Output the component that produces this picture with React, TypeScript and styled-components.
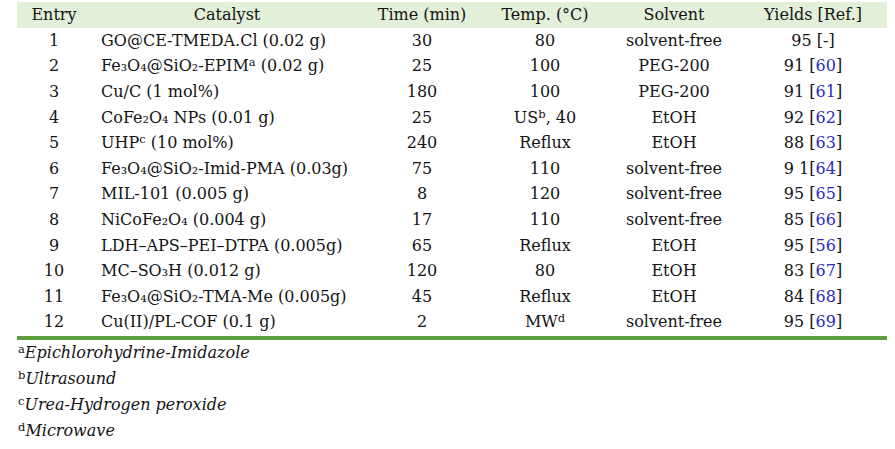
import React from "react";
import styled, {createGlobalStyle} from "styled-components";

const GlobalStyle = createGlobalStyle`
    body {
        margin: 0;
        background: #ffffff;
        font-family: "DejaVu Serif", "Liberation Serif", serif;
        color: #141414;
    }
`;

const Page = styled.div`
    padding: 2px 0 0 17px;
    width: 870px;
`;

const cols = "74px 272px 118px 128px 130px 148px";

const HeaderRow = styled.div`
    display: grid;
    grid-template-columns: ${cols};
    align-items: center;
    height: 26px;
    background: #e2efd9;
    font-size: 16px;
`;

const Row = styled.div`
    display: grid;
    grid-template-columns: ${cols};
    align-items: center;
    height: 25.6px;
    font-size: 16px;
`;

const Cell = styled.div<{$left?: boolean}>`
    text-align: ${(p) => (p.$left ? "left" : "center")};
    padding-left: ${(p) => (p.$left ? "10px" : "0")};
    white-space: nowrap;
    line-height: 1;
`;

const Rule = styled.div`
    height: 4px;
    background: #5c9d3d;
    margin-top: 1px;
`;

const Sup = styled.sup`
    font-size: 11.5px;
    line-height: 0;
    vertical-align: 0.45em;
    font-style: normal;
`;

const Ref = styled.span`
    color: #2a2ac0;
`;

const Notes = styled.div`
    display: flex;
    flex-direction: column;
    margin-left: 1px;
`;

const Note = styled.div`
    height: 26px;
    line-height: 26px;
    font-size: 16px;
    font-style: italic;
`;

type Entry = {
    n: string;
    catalyst: React.ReactNode;
    time: string;
    temp: React.ReactNode;
    solvent: string;
    yld: string;
    ref: string;
};

const rows: Entry[] = [
    {n: "1", catalyst: "GO@CE-TMEDA.Cl (0.02 g)", time: "30", temp: "80", solvent: "solvent-free", yld: "95 ", ref: "-"},
    {n: "2", catalyst: <>Fe₃O₄@SiO₂-EPIM<Sup>a</Sup> (0.02 g)</>, time: "25", temp: "100", solvent: "PEG-200", yld: "91 ", ref: "60"},
    {n: "3", catalyst: "Cu/C (1 mol%)", time: "180", temp: "100", solvent: "PEG-200", yld: "91 ", ref: "61"},
    {n: "4", catalyst: "CoFe₂O₄ NPs (0.01 g)", time: "25", temp: <>US<Sup>b</Sup>, 40</>, solvent: "EtOH", yld: "92 ", ref: "62"},
    {n: "5", catalyst: <>UHP<Sup>c</Sup> (10 mol%)</>, time: "240", temp: "Reflux", solvent: "EtOH", yld: "88 ", ref: "63"},
    {n: "6", catalyst: "Fe₃O₄@SiO₂-Imid-PMA (0.03g)", time: "75", temp: "110", solvent: "solvent-free", yld: "9 1", ref: "64"},
    {n: "7", catalyst: "MIL-101 (0.005 g)", time: "8", temp: "120", solvent: "solvent-free", yld: "95 ", ref: "65"},
    {n: "8", catalyst: "NiCoFe₂O₄ (0.004 g)", time: "17", temp: "110", solvent: "solvent-free", yld: "85 ", ref: "66"},
    {n: "9", catalyst: "LDH–APS–PEI–DTPA (0.005g)", time: "65", temp: "Reflux", solvent: "EtOH", yld: "95 ", ref: "56"},
    {n: "10", catalyst: "MC–SO₃H (0.012 g)", time: "120", temp: "80", solvent: "EtOH", yld: "83 ", ref: "67"},
    {n: "11", catalyst: "Fe₃O₄@SiO₂-TMA-Me (0.005g)", time: "45", temp: "Reflux", solvent: "EtOH", yld: "84 ", ref: "68"},
    {n: "12", catalyst: "Cu(II)/PL-COF (0.1 g)", time: "2", temp: <>MW<Sup>d</Sup></>, solvent: "solvent-free", yld: "95 ", ref: "69"},
];

const notes = [
    ["a", "Epichlorohydrine-Imidazole"],
    ["b", "Ultrasound"],
    ["c", "Urea-Hydrogen peroxide"],
    ["d", "Microwave"],
];

export default function App() {
    return (
        <Page>
            <GlobalStyle />
            <HeaderRow>
                <Cell>Entry</Cell>
                <Cell>Catalyst</Cell>
                <Cell>Time (min)</Cell>
                <Cell>Temp. (°C)</Cell>
                <Cell>Solvent</Cell>
                <Cell>Yields [Ref.]</Cell>
            </HeaderRow>
            {rows.map((r) => (
                <Row key={r.n}>
                    <Cell>{r.n}</Cell>
                    <Cell $left>{r.catalyst}</Cell>
                    <Cell>{r.time}</Cell>
                    <Cell>{r.temp}</Cell>
                    <Cell>{r.solvent}</Cell>
                    <Cell>
                        {r.yld}[{r.ref === "-" ? "-" : <Ref>{r.ref}</Ref>}]
                    </Cell>
                </Row>
            ))}
            <Rule />
            <Notes>
                {notes.map(([k, t]) => (
                    <Note key={k}>
                        <Sup>{k}</Sup>
                        {t}
                    </Note>
                ))}
            </Notes>
        </Page>
    );
}
